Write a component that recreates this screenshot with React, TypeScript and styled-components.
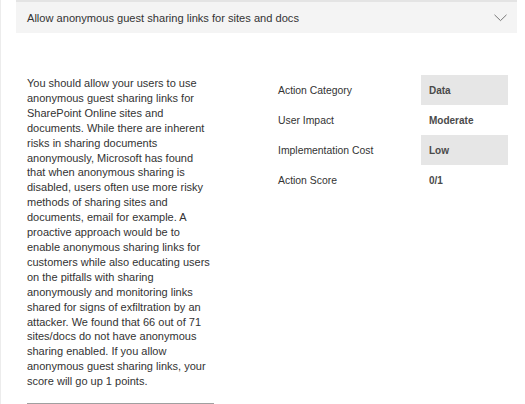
import styled, { createGlobalStyle } from 'styled-components';

const GlobalStyle = createGlobalStyle`
  html, body {
    margin: 0;
    padding: 0;
    background: #ffffff;
  }
  body {
    font-family: 'Liberation Sans', Arial, sans-serif;
    color: #333333;
  }
`;

interface ActionDetail {
  label: string;
  value: string;
}

const DETAILS: ActionDetail[] = [
  { label: 'Action Category', value: 'Data' },
  { label: 'User Impact', value: 'Moderate' },
  { label: 'Implementation Cost', value: 'Low' },
  { label: 'Action Score', value: '0/1' },
];

const DESCRIPTION =
  'You should allow your users to use anonymous guest sharing links for SharePoint Online sites and documents. While there are inherent risks in sharing documents anonymously, Microsoft has found that when anonymous sharing is disabled, users often use more risky methods of sharing sites and documents, email for example. A proactive approach would be to enable anonymous sharing links for customers while also educating users on the pitfalls with sharing anonymously and monitoring links shared for signs of exfiltration by an attacker. We found that 66 out of 71 sites/docs do not have anonymous sharing enabled. If you allow anonymous guest sharing links, your score will go up 1 points.';

const ChevronDown = () => (
  <svg width="13" height="8" viewBox="0 0 13 8" fill="none">
    <path d="M0.5 0.8 L6.5 6.6 L12.5 0.8" stroke="#777" strokeWidth="1" />
  </svg>
);

const App = () => {
  return (
    <>
      <GlobalStyle />
      <Page>
        <Header>
          <Title>Allow anonymous guest sharing links for sites and docs</Title>
          <ChevronDown />
        </Header>
        <Body>
          <Description>{DESCRIPTION}</Description>
          <DetailTable>
            {DETAILS.map((detail, index) => (
              <DetailRow key={detail.label}>
                <Label>{detail.label}</Label>
                <Value shaded={index % 2 === 0}>{detail.value}</Value>
              </DetailRow>
            ))}
          </DetailTable>
        </Body>
      </Page>
    </>
  );
};

const Page = styled.div`
  height: 404px;
  overflow: hidden;
  border-left: 1px solid #ececec;
  padding-left: 15px;
  padding-right: 8px;
  box-sizing: border-box;
`;

const Header = styled.div`
  height: 33px;
  box-sizing: border-box;
  border-top: 2px solid #e4e4e4;
  background: #f4f4f4;
  display: flex;
  align-items: center;
  justify-content: space-between;
  padding: 0 10px 0 11px;
`;

const Title = styled.span`
  font-size: 11.1px;
  color: #333333;
`;

const Body = styled.div`
  display: flex;
  align-items: flex-start;
  padding-left: 11px;
  margin-top: 43px;
`;

const Description = styled.p`
  margin: 0;
  width: 187px;
  font-size: 11px;
  line-height: 14.9px;
  color: #333333;
  padding-bottom: 14px;
  border-bottom: 1px solid #a0a0a0;
`;

const DetailTable = styled.div`
  margin-left: 64px;
  margin-top: -1px;
  display: flex;
  flex-direction: column;
`;

const DetailRow = styled.div`
  display: flex;
  height: 30px;
`;

const Label = styled.div`
  width: 143px;
  display: flex;
  align-items: center;
  font-size: 10.4px;
  color: #333333;
`;

const Value = styled.div<{ shaded: boolean }>`
  width: 87px;
  box-sizing: border-box;
  padding-left: 8px;
  display: flex;
  align-items: center;
  font-size: 10px;
  font-weight: 700;
  color: #4a4a4a;
  background: ${(p) => (p.shaded ? '#e6e6e6' : 'transparent')};
`;

export default App;
